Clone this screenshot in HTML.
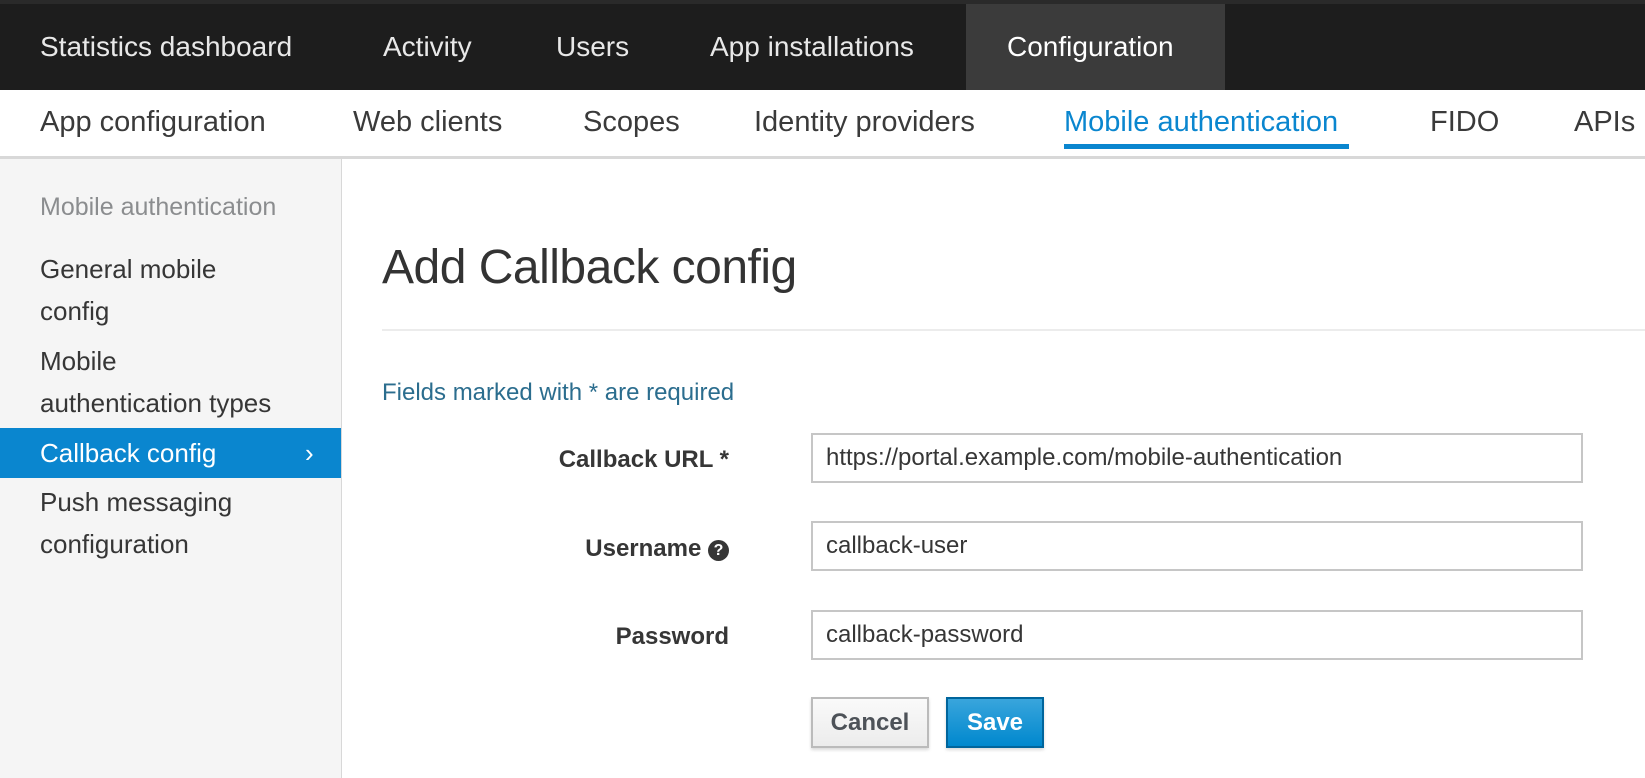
<!DOCTYPE html>
<html><head><meta charset="utf-8"><style>
*{box-sizing:border-box;margin:0;padding:0}
body{width:1645px;height:778px;overflow:hidden;font-family:"Liberation Sans",sans-serif;background:#fff;position:relative;color:#363636}
.top{position:absolute;left:0;top:0;width:1645px;height:90px;background:#1d1d1d;border-top:4px solid #2a2a2a}
.top span{position:absolute;top:0;line-height:86px;color:#e8e8e8;font-size:28px}
.top .act{left:966px;width:259px;height:86px;background:#3b3b3b;padding-left:41px;color:#fff}
.sub{position:absolute;left:0;top:90px;width:1645px;height:69px;border-bottom:3px solid #d8d8d8;background:#fff}
.sub span{position:absolute;top:0;line-height:64px;font-size:29px;color:#3a3a3a}
.sub .on{color:#0a86cf;line-height:64px;height:64px}
.ul{position:absolute;left:1064px;top:144px;width:285px;height:5px;background:#0a86cf}
.side{position:absolute;left:0;top:159px;width:342px;height:619px;background:#f5f5f5;border-right:1px solid #d8d8d8}
.side div{position:absolute;left:40px;font-size:26px;line-height:42px;color:#363636}
.side .hd{color:#8b8d8f;font-size:25px}
.side .sel{left:0;width:341px;height:50px;background:#0a86cf;color:#fff;padding-left:40px;line-height:50px}
h1{position:absolute;left:382px;top:240px;font-size:48px;font-weight:normal;color:#333;letter-spacing:-0.5px}
.hr{position:absolute;left:382px;top:329px;width:1263px;height:2px;background:#ececec}
.req{position:absolute;left:382px;top:379px;font-size:24px;color:#2b6d8e}
.lbl{position:absolute;right:916px;font-size:24px;font-weight:bold;color:#363636;text-align:right}
.in{position:absolute;left:811px;width:772px;height:50px;border:2px solid #c6c6c6;font-size:24px;line-height:46px;padding-left:13px;color:#363636}
.btn{position:absolute;top:697px;height:51px;font-size:24px;font-weight:bold;text-align:center;line-height:47px;border:2px solid #bbb;background:linear-gradient(#fafafa,#ececec);color:#4d5258;box-shadow:0 2px 3px rgba(0,0,0,.15)}
.save{background:linear-gradient(#39a5dc,#0088ce);border-color:#00659c;color:#fff}
</style></head><body>
<div class="top">
<span style="left:40px">Statistics dashboard</span>
<span style="left:383px">Activity</span>
<span style="left:556px">Users</span>
<span style="left:710px">App installations</span>
<span class="act">Configuration</span>
</div>
<div class="sub">
<span style="left:40px">App configuration</span>
<span style="left:353px">Web clients</span>
<span style="left:583px">Scopes</span>
<span style="left:754px">Identity providers</span>
<span class="on" style="left:1064px">Mobile authentication</span>
<span style="left:1430px">FIDO</span>
<span style="left:1574px">APIs</span>
</div>
<div class="ul"></div>
<div class="side">
<div class="hd" style="top:27px">Mobile authentication</div>
<div style="top:89px">General mobile</div>
<div style="top:131px">config</div>
<div style="top:181px">Mobile</div>
<div style="top:223px">authentication types</div>
<div class="sel" style="top:269px">Callback config<span style="position:absolute;left:305px">›</span></div>
<div style="top:322px">Push messaging</div>
<div style="top:364px">configuration</div>
</div>
<h1>Add Callback config</h1>
<div class="hr"></div>
<div class="req">Fields marked with * are required</div>
<div class="lbl" style="top:446px">Callback URL *</div>
<div class="in" style="top:433px">https://portal.example.com/mobile-authentication</div>
<div class="lbl" style="top:535px">Username <span style="display:inline-block;width:21px;height:21px;border-radius:50%;background:#363636;color:#fff;font-size:16px;line-height:21px;text-align:center;vertical-align:1px">?</span></div>
<div class="in" style="top:521px">callback-user</div>
<div class="lbl" style="top:623px">Password</div>
<div class="in" style="top:610px">callback-password</div>
<div class="btn" style="left:811px;width:118px">Cancel</div>
<div class="btn save" style="left:946px;width:98px">Save</div>
</body></html>
